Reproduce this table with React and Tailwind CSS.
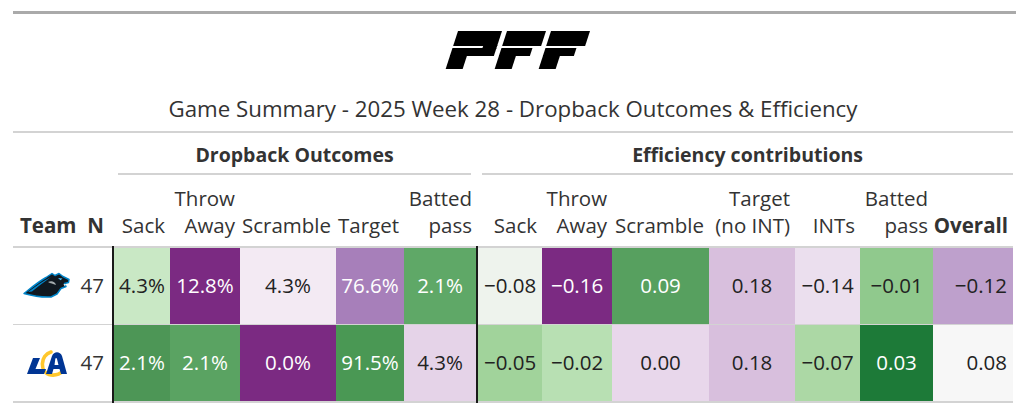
import React from "react";

const FONT = { fontFamily: '"Open Sans", "Noto Sans", Arial, sans-serif' };

function PffLogo() {
  return (
    <svg width="152" height="38" viewBox="0 0 152 38">
      <g transform="skewX(-18)" fill="#000">
        {/* P */}
        <rect x="20" y="0" width="44" height="15" />
        <rect x="50" y="14" width="14" height="4" />
        <rect x="20" y="17" width="44" height="8" />
        <rect x="20" y="24" width="17" height="14" />
        {/* F */}
        <rect x="69" y="0" width="39" height="15" />
        <rect x="69" y="17" width="31" height="8" />
        <rect x="69" y="24" width="17" height="14" />
        {/* F */}
        <rect x="113" y="0" width="39" height="15" />
        <rect x="113" y="17" width="31" height="8" />
        <rect x="113" y="24" width="17" height="14" />
      </g>
    </svg>
  );
}

function PanthersLogo() {
  return (
    <svg width="48" height="28" viewBox="0 0 48 28">
      <path
        d="M1 21.5 C8 16 15 10 23 5.5 L29 1.5 L32 3.5 L36 1.5 L40 4.5 L46 7.5 L45.5 10.5 L41.5 11.5 L43 14.5 L38 16.5 L34 22 L28 25 C20 25.5 10 24 1 21.5 Z"
        fill="#101820"
        stroke="#0085CA"
        strokeWidth="1.5"
        strokeLinejoin="round"
      />
      <path d="M5 20 C13 14 20 9 28 5 C22 9.5 15 14.5 9 19.5 Z" fill="#0085CA" />
      <path d="M35 6 L39.5 6.5 L37.5 8.2 Z" fill="#4fc3f7" />
      <path d="M40.5 12 L43.5 12.5 L41.5 14 Z" fill="#ffffff" />
      <path d="M25 10 C28.5 8.5 32 9.5 33 13 C30 11.8 27.5 11.5 25 10 Z" fill="#a5acaf" />
    </svg>
  );
}

function RamsLogo() {
  return (
    <svg width="42" height="30" viewBox="0 0 42 30">
      <path
        d="M25 4 C14 7 13 25 25 27 C30 27.6 34 26 37 23"
        fill="none"
        stroke="#FFC72C"
        strokeWidth="3.6"
        strokeLinecap="round"
      />
      <path d="M7 10 L14 10 L9.5 21 L20 21 L18 26 L1 26 Z" fill="#003594" />
      <path
        d="M20 26 L26 8 C28 3 34 3 36 8 L41 26 L35 26 L33.5 21 L27.5 21 L26 26 Z M28.5 17 L32.5 17 L31 11 C30.6 9.8 29.6 9.8 29.3 11 Z"
        fill="#003594"
        fillRule="evenodd"
      />
    </svg>
  );
}

const outcomes = [
  [
    { v: "4.3%", bg: "#c9e8c5", w: false },
    { v: "12.8%", bg: "#7b2a82", w: true },
    { v: "4.3%", bg: "#f3eaf3", w: false },
    { v: "76.6%", bg: "#a77fba", w: true },
    { v: "2.1%", bg: "#5fa867", w: true },
  ],
  [
    { v: "2.1%", bg: "#4d9656", w: true },
    { v: "2.1%", bg: "#5aa362", w: true },
    { v: "0.0%", bg: "#7b2a82", w: true },
    { v: "91.5%", bg: "#4a9854", w: true },
    { v: "4.3%", bg: "#e5d3e8", w: false },
  ],
];

const eff = [
  [
    { v: "\u22120.08", bg: "#eef3ed", w: false },
    { v: "\u22120.16", bg: "#7b2a82", w: true },
    { v: "0.09", bg: "#57a05f", w: true },
    { v: "0.18", bg: "#d8bfdd", w: false },
    { v: "\u22120.14", bg: "#ebdfee", w: false },
    { v: "\u22120.01", bg: "#90c98d", w: false },
    { v: "\u22120.12", bg: "#bea0cc", w: false },
  ],
  [
    { v: "\u22120.05", bg: "#a1d39b", w: false },
    { v: "\u22120.02", bg: "#b8e0b3", w: false },
    { v: "0.00", bg: "#e8d7eb", w: false },
    { v: "0.18", bg: "#d8bfdd", w: false },
    { v: "\u22120.07", bg: "#acd8a5", w: false },
    { v: "0.03", bg: "#1d7a38", w: true },
    { v: "0.08", bg: "#f7f7f7", w: false },
  ],
];

const logos = [<PanthersLogo key="p" />, <RamsLogo key="r" />];

export default function App() {
  return (
    <div className="w-[1024px] h-[416px] bg-white text-[#333333] pt-[11px]" style={FONT}>
      <div className="ml-[13px] w-[1003px] h-[3px] bg-[#aaaaaa]" />
      <div className="flex justify-center mt-[17px] pl-[4px]">
        <PffLogo />
      </div>
      <div className="ml-[13px] w-[1000px] mt-[26px] border-b-2 border-[#d3d3d3] pb-[8px] text-center text-[22.3px] leading-[28px]">
        Game Summary - 2025 Week 28 - Dropback Outcomes &amp; Efficiency
      </div>
      <table className="ml-[13px] w-[1000px] table-fixed border-collapse text-[20.5px]">
        <colgroup>
          <col className="w-[65px]" />
          <col className="w-[35px]" />
          <col className="w-[57px]" />
          <col className="w-[70px]" />
          <col className="w-[96px]" />
          <col className="w-[68px]" />
          <col className="w-[73px]" />
          <col className="w-[65px]" />
          <col className="w-[70px]" />
          <col className="w-[97px]" />
          <col className="w-[86px]" />
          <col className="w-[65px]" />
          <col className="w-[73px]" />
          <col className="w-[80px]" />
        </colgroup>
        <thead>
          <tr>
            <th colSpan={2} />
            <th colSpan={5} className="p-0 font-bold text-[19.5px]">
              <div className="ml-[5px] mr-[6px] border-b-2 border-[#d3d3d3] h-[42px] flex items-center justify-center pt-[4px]">
                Dropback Outcomes
              </div>
            </th>
            <th colSpan={7} className="p-0 font-bold text-[19.5px]">
              <div className="ml-[5px] border-b-2 border-[#d3d3d3] h-[42px] flex items-center justify-center pt-[4px]">
                Efficiency contributions
              </div>
            </th>
          </tr>
          <tr className="border-b-2 border-[#d3d3d3] font-normal">
            <th className="h-[72px] align-bottom text-left pl-[7px] pb-[7px] font-bold leading-[27px]">Team</th>
            <th className="align-bottom text-right pr-[9px] pb-[7px] font-bold leading-[27px]">N</th>
            {[
              "Sack",
              ["Throw", "Away"],
              "Scramble",
              "Target",
              ["Batted", "pass"],
              "Sack",
              ["Throw", "Away"],
              "Scramble",
              ["Target", "(no INT)"],
              "INTs",
              ["Batted", "pass"],
            ].map((h, i) => (
              <th key={i} className="align-bottom text-right pr-[5px] pb-[7px] font-normal leading-[27px] whitespace-nowrap">
                {Array.isArray(h) ? (
                  <>
                    <div>{h[0]}</div>
                    <div>{h[1]}</div>
                  </>
                ) : (
                  h
                )}
              </th>
            ))}
            <th className="align-bottom text-right pr-[5px] pb-[7px] font-bold leading-[27px]">Overall</th>
          </tr>
        </thead>
        <tbody>
          {[0, 1].map((r) => (
            <tr key={r} className={r === 0 ? "border-b border-[#d3d3d3]" : "border-b-2 border-[#d3d3d3]"}>
              <td className={`${r === 0 ? "h-[77px]" : "h-[78px]"} p-0`}>
                <div className="flex justify-center pl-[2px]">{logos[r]}</div>
              </td>
              <td className="text-right pr-[8px]">47</td>
              {outcomes[r].map((c, i) => (
                <td
                  key={i}
                  className={`text-center p-0 ${c.w ? "text-white" : "text-[#222222]"} ${i === 0 ? "border-l-2 border-l-[#1a1a1a]" : ""}`}
                  style={{ backgroundColor: c.bg }}
                >
                  {c.v}
                </td>
              ))}
              {eff[r].map((c, i) => (
                <td
                  key={i}
                  className={`p-0 ${i === 6 ? "text-right pr-[6px]" : "text-center"} ${c.w ? "text-white" : "text-[#222222]"} ${i === 0 ? "border-l-2 border-l-[#1a1a1a]" : ""}`}
                  style={{ backgroundColor: c.bg }}
                >
                  {c.v}
                </td>
              ))}
            </tr>
          ))}
        </tbody>
      </table>
    </div>
  );
}
